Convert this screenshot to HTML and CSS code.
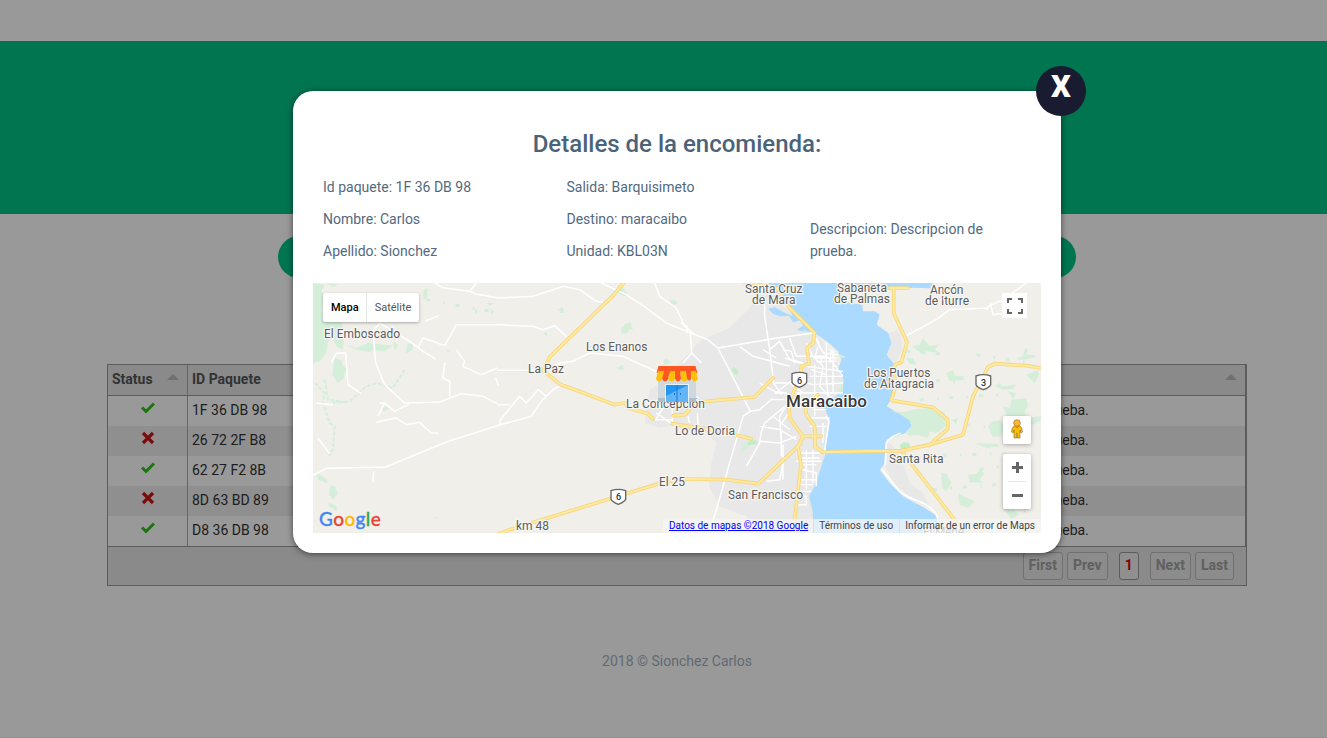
FILE: index.html
```html
<!DOCTYPE html>
<html lang="es">
<head>
<meta charset="utf-8">
<title>Detalles de la encomienda</title>
<link rel="stylesheet" href="styles.css">
</head>
<body>
<div class="page">
  <header class="banner"></header>
  <div class="search"></div>
  <section class="table">
    <div class="thead"><div class="cell status">Status<i class="sort"></i></div><div class="cell">ID Paquete</div><div class="cell last"><i class="sort"></i></div></div>
    <div class="row"><div class="cell status"><svg class="ico" viewBox="0 0 14 14"><path class="ok" d="M1 6.5l4 4 8-8"/></svg></div><div class="cell">1F 36 DB 98</div><div class="cell last">Descripcion de prueba.</div></div>
    <div class="row"><div class="cell status"><svg class="ico" viewBox="0 0 14 14"><path class="no" d="M2 2l10 10M12 2L2 12"/></svg></div><div class="cell">26 72 2F B8</div><div class="cell last">Descripcion de prueba.</div></div>
    <div class="row"><div class="cell status"><svg class="ico" viewBox="0 0 14 14"><path class="ok" d="M1 6.5l4 4 8-8"/></svg></div><div class="cell">62 27 F2 8B</div><div class="cell last">Descripcion de prueba.</div></div>
    <div class="row"><div class="cell status"><svg class="ico" viewBox="0 0 14 14"><path class="no" d="M2 2l10 10M12 2L2 12"/></svg></div><div class="cell">8D 63 BD 89</div><div class="cell last">Descripcion de prueba.</div></div>
    <div class="row"><div class="cell status"><svg class="ico" viewBox="0 0 14 14"><path class="ok" d="M1 6.5l4 4 8-8"/></svg></div><div class="cell">D8 36 DB 98</div><div class="cell last">Descripcion de prueba.</div></div>
    <div class="pager"><span class="pg">First</span><span class="pg">Prev</span><span class="pg current">1</span><span class="pg">Next</span><span class="pg">Last</span></div>
  </section>
  <footer class="copy">2018 © Sionchez Carlos</footer>
</div>
<div class="overlay">
  <div class="modal">
    <button class="close">X</button>
    <h2 class="title">Detalles de la encomienda:</h2>
    <div class="details">
      <div class="col"><p>Id paquete: 1F 36 DB 98</p><p>Nombre: Carlos</p><p>Apellido: Sionchez</p></div>
      <div class="col"><p>Salida: Barquisimeto</p><p>Destino: maracaibo</p><p>Unidad: KBL03N</p></div>
      <div class="col"><p>Descripcion: Descripcion de prueba.</p></div>
    </div>
    <div class="map">
      <svg class="canvas" viewBox="0 0 2184 750">
        <!-- urban areas -->
        <path class="urban" d="M1360 0L1325 50L1310 75L1250 135L1165 170L1100 240L1080 330L1060 400L1100 440L1180 450L1210 480L1195 540L1188 610L1220 670L1300 700L1345 750L1520 750L1520 620L1560 440L1600 280L1510 150L1400 60Z"/>
        <path class="urban" d="M1010 320L1040 300L1150 290L1150 400L1100 425L1040 435L995 420L1000 380Z"/>
        <!-- lake -->
        <path class="water" d="M1365 0L1395 35L1425 75L1440 100L1412 88L1385 72L1366 78L1380 92L1400 100L1428 98L1440 118L1462 112L1470 128L1452 140L1475 148L1505 150L1545 178L1575 205L1585 230L1575 260L1592 290L1588 325L1562 345L1535 375L1550 410L1542 440L1534 480L1538 510L1522 560L1505 610L1488 640L1498 680L1504 750L1889 750L1874 700L1835 675L1770 640L1730 600L1701 562L1715 540L1716 500L1721 470L1776 450L1796 430L1790 412L1760 392L1721 370L1741 340L1741 240L1721 215L1736 180L1726 150L1691 125L1700 95L1685 85L1650 85L1648 65L1600 58L1575 35L1600 22L1740 20L1800 14L1850 16L1860 0Z"/>
        <path class="urban" d="M1726 150L1755 142L1765 165L1768 205L1745 240L1724 215L1736 180ZM1722 475L1716 545L1740 600L1790 640L1850 670L1830 630L1790 600L1770 540L1750 500Z"/>
        <path class="shore" d="M1763 450Q1725 465 1720 480L1717 545M1704 556C1745 600 1745 625 1800 648Q1860 668 1872 700L1884 750M1538 400L1548 415L1538 480L1534 515"/>
        <!-- vegetation -->
        <path class="green" d="M0 0L35 5L25 25L40 40L28 60L25 90L60 75L95 60L105 80L85 120L95 150L90 200L70 190L60 165L45 175L40 210L20 235L0 240ZM65 225L85 232L90 250L100 255L92 285L75 300L58 275ZM40 0L75 5L60 12ZM332 20L345 15L342 45L330 50ZM240 175L255 185L245 205ZM100 185L130 195L165 180L240 188L215 205L180 202L170 208L130 200ZM282 185L300 180L298 200L278 212ZM205 375L222 370L228 378L210 385ZM52 605L65 610L75 630L60 650L48 635ZM10 570L45 590L40 600L15 590ZM482 75L494 85L490 95ZM520 60L545 60L530 68ZM530 78L545 85L535 95ZM400 200L410 203L405 210ZM45 658L70 668L72 685L48 670ZM362 700L376 704L370 708Z"/>
        <path class="greenline" d="M60 360L110 355L160 310L190 300L240 315L275 260M35 290L45 350L100 358M5 300L35 330L30 360L50 420L65 430L60 500L48 520"/>
        <path class="green" d="M905 25L925 8L935 22L950 40L930 38ZM925 135L938 122L952 118L960 140L950 138L940 152L925 150ZM745 70L755 90L740 90ZM690 150L703 148L700 160ZM735 80L750 72L752 88ZM910 255L930 245L932 258L920 262ZM1050 230L1060 225L1075 240L1055 245ZM1070 52L1085 50L1095 60L1080 65ZM1255 265L1262 252L1278 262L1275 280L1258 274ZM1278 520L1290 485L1305 470L1335 478L1310 488L1285 510ZM1576 320L1590 300L1590 325L1580 340ZM1572 210L1600 222L1585 226ZM1466 140L1500 148L1480 152Z"/>
        <path class="green" d="M1732 382L1770 388L1810 378L1860 375L1895 388L1898 430L1870 450L1850 445L1845 465L1815 455L1790 458L1776 450L1796 430L1790 412L1760 392ZM1798 190L1820 185L1830 165L1850 190L1878 185L1865 200L1880 210L1840 205L1830 215L1810 200ZM1780 225L1800 225L1810 245L1790 242ZM1900 270L1920 262L1926 280L1950 278L1955 290L1910 294ZM2070 370L2090 375L2095 350L2140 345L2145 370L2135 385L2140 405L2184 400L2184 412L2160 425L2120 410L2090 420L2080 395ZM2025 430L2040 415L2060 412L2075 430L2065 460L2040 462ZM1965 575L1990 572L2000 562L2015 570L2000 590L2012 600L1970 598ZM1885 570L1900 572L1915 600L1900 626L1888 615ZM1935 630L1950 640L1975 650L1985 655L1965 675L1940 665ZM2070 675L2090 670L2110 665L2105 685L2120 695L2095 708ZM2110 225L2130 220L2136 195L2145 200L2140 215L2165 215L2170 222L2120 232ZM2045 310L2060 300L2065 310L2110 305L2100 318L2070 320ZM2140 275L2175 262L2178 275L2165 300ZM1985 480L2050 482L2060 490L2020 495ZM2120 650L2135 640L2150 655L2135 690ZM1915 410L1935 405L1930 425ZM2085 325L2110 330L2100 350Z"/>
        <path class="park" d="M1762 485L1772 477L1788 480L1792 492L1775 500L1762 496ZM1305 478L1312 470L1335 474L1330 484L1306 486ZM1257 262L1262 253L1276 264L1272 276Z"/>
        <path class="speck" d="M1780 285L1960 300M1990 215L2160 240M1820 350L2060 335M1800 520L2100 510M1860 620L2110 600M1960 425L2120 445M2000 560L2100 545M1780 205L1900 215M1910 725L2100 715M340 50L560 90"/>
        <!-- local roads -->
        <path class="road" d="M365 0L390 14L470 25L492 34L552 44M470 25L490 0M200 120L180 145L188 240L215 305L275 360L380 357L445 332L510 340L552 362M200 120L290 175L330 205L368 228M315 195L330 165L395 188L430 125L552 125M430 200L455 235L450 250L505 275L552 255M335 115L378 98M395 240L390 285L410 295L410 340M70 210H98L105 305L145 332M55 240L70 210M200 360L215 360L245 385L290 362M215 360L195 400M190 418L250 405L280 425L320 418L355 450H375M0 577L40 556L218 552L400 477L552 428M15 465L50 512M8 360L60 366M182 565L180 598M548 285L556 308"/>
        <path class="road" d="M552 45L660 40L752 10L800 20L850 55L880 60M865 0L940 35L1000 75L1060 120L1184 170L1215 195L1394 165L1500 150M1025 0L1040 40L1090 75L1115 130L1140 150M552 125L660 130L690 140L725 128L760 160M552 262H690M552 428L655 400L685 355L720 320L755 300M552 365H590M562 425L562 410L620 340L640 360L675 320L700 340M700 262L740 240L780 235L830 210L930 220L1040 270M1104 120L1122 130V150M1132 150L1136 210L1165 240M1136 210L1110 240"/>
        <path class="road" d="M1215 195L1312 385L1290 400L1190 750M1312 385L1340 380L1380 345M1440 350L1355 420L1344 450L1340 480L1300 550M1355 50V100L1370 200L1382 300L1405 335M1280 190L1320 220L1430 250M1370 200L1400 175L1430 230L1480 245M1430 165L1450 220H1540M1040 370L1050 375L1028 410H1080M1030 390L1080 425M1078 370V425M1360 595L1400 590L1410 540M1470 560L1510 570V610M1450 510H1520M1450 535H1525M1455 590H1510M1455 640H1480V665H1452M1410 485V590M1125 400L1130 420M1153 390L1155 425M1095 280L1050 310M1340 475L1400 480L1450 460"/>
        <path class="road thin" d="M1510 165L1525 200L1560 240L1590 280M1480 180L1500 220L1530 250L1520 310L1560 350M1510 170L1530 210L1575 215M1480 250L1590 265M1490 280H1590M1380 300H1430L1470 330M1400 320L1440 290L1500 305L1590 300M1450 330L1590 330M1370 350L1500 350M1500 380H1540M1495 405H1550M1490 430H1540M1505 245V400M1540 180V300M1560 200V330M1430 350L1400 400L1405 480M1460 260L1440 340M1380 400L1430 440M1340 430L1400 440L1450 470M1500 500V600M1480 500V620M1465 525H1520M1460 545H1510M1530 420V480M1455 605H1500M1458 625H1495M1405 440V520M1415 225L1470 240M1384 330H1420L1430 385L1400 430M1495 260L1540 275L1545 340M1410 200L1435 205L1445 240M1340 300L1385 325L1420 330M1350 200L1390 225M1515 190L1505 225H1570M1510 235H1570M1525 220V240M1555 200L1550 240"/>
        <path class="road" d="M1780 158L1870 110L1910 80L2025 75M2140 0L2070 50L2025 70L2022 80M2032 60L2040 95L2060 92L2085 105"/>
        <!-- highways -->
        <g class="hwy-edge"><use href="#hw"/></g>
        <g class="hwy"><path id="hw" d="M932 0L900 38L710 222L690 262L740 303L905 365L935 360L945 375L1005 392L1020 408M1080 398L1115 395L1150 358L1235 350L1325 342L1380 285M1078 422L1220 445L1315 467M552 755L590 740L1050 598L1124 588L1240 590L1336 602L1460 485L1470 460H1525M1290 -5L1390 15L1430 75L1505 150L1500 180L1482 195L1488 242L1465 250L1462 285Q1440 325 1427 365L1430 405L1455 440L1470 460L1455 490L1464 545L1440 750M1515 335L1478 375L1480 395L1505 430L1506 490L1530 508L1644 505L1765 503L1850 485L1950 455L1980 340L2025 252L2045 242L2140 248L2184 255M1729 15H1785M1742 15V90L1782 178L1765 238L1745 245V320L1735 352L1860 373L1904 410V438L1848 487M1765 503L1955 750"/></g>
        <g class="shield"><path id="sh" d="M894 623Q916 615 938 623V649Q935 657 916 664Q897 657 894 649Z"/><use href="#sh" x="543" y="-351"/><use href="#sh" x="1095" y="-344"/></g>
      </svg>
      <svg class="labels" viewBox="0 0 728 250">
        <g class="lb">
          <text x="11" y="55" textLength="76">El Emboscado</text><text x="273" y="68" textLength="61.5">Los Enanos</text><text x="215" y="90" textLength="36">La Paz</text><text x="313" y="124.500" textLength="79">La Concepción</text><text x="362" y="152" textLength="60">Lo de Doria</text><text x="346" y="203" textLength="26">El 25</text><text x="415" y="216" textLength="75">San Francisco</text><text x="203" y="247" textLength="33">km 48</text>
          <text x="432" y="9.500" textLength="57.500">Santa Cruz</text><text x="439" y="21" textLength="43.500">de Mara</text><text x="524" y="8.500" textLength="50">Sabaneta</text><text x="521" y="20" textLength="56">de Palmas</text><text x="617" y="10.500" textLength="33.500">Ancón</text><text x="612" y="22" textLength="44">de Iturre</text><text x="554" y="93.500" textLength="63.500">Los Puertos</text><text x="551" y="105" textLength="70">de Altagracia</text><text x="576" y="180" textLength="54.500">Santa Rita</text><text x="610" y="253" textLength="41">El Mene</text>
        </g>
        <text class="city" x="473" y="124" textLength="81">Maracaibo</text>
        <g class="num"><text x="305.500" y="217">6</text><text x="486.500" y="100.500">6</text><text x="670.500" y="102.500">3</text></g>
        <!-- shop marker -->
        <g>
          <path fill="#cfd8dc" d="M345 97h38v22h-38z"/><path fill="#b0bec5" d="M345 115h8v4h-8zM376 115h7v4h-7z"/>
          <path fill="#e3f2fd" d="M352 101h24v18h-24z"/><path fill="#64b5f6" d="M353 102h22v17h-22z"/><path fill="#2196f3" d="M353 102h22l-22 11z"/><path fill="#1976d2" d="M363.500 102h1v17h-1z"/><path fill="#1976d2" d="M361 110h1v2h-1zM367 110h1v2h-1z"/>
          <path fill="#ff5722" d="M345.500 83h37l2 7h-41z"/>
          <path fill="#ffc107" d="M345 88h6l-1.500 8q-4 5-6.500 0zM357 88h5v8q-3 5-7 0zM367 88h6l2 8q-4 5-7 0z"/><path fill="#ff5722" d="M351 88h6l-2 8q-3 5-6 0zM362 88h5l1 8q-3 5-6 0zM373 88h5v8q-1 3-4 0z"/><path fill="#ffc107" d="M378 88h5l2 8q-4 5-6 0z"/>
        </g>
      </svg>
      <div class="types"><span class="on">Mapa</span><span>Satélite</span></div>
      <div class="glogo"><span class="b">G</span><span class="r">o</span><span class="y">o</span><span class="b">g</span><span class="g">l</span><span class="r">e</span></div>
      <div class="full"><svg viewBox="0 0 18 18"><path d="M2 6V2H6M12 2h4v4M16 12v4h-4M6 16H2v-4"/></svg></div>
      <div class="peg"><svg viewBox="0 0 14 20"><path fill="#fbbc04" stroke="#9a7b3c" stroke-width=".7" d="M4 7Q2 8 1.500 13L3 14L4 11V19H6.700V14H7.300V19H10V11L11 14L12.500 13Q12 8 10 7Z"/><circle cx="7" cy="4" r="3.300" fill="#fbb829" stroke="#9a7b3c" stroke-width=".7"/><path fill="#e07b22" d="M5 7.300h4L7 9.500z"/></svg></div>
      <div class="zoom"><span class="plus"></span><span class="minus"></span></div>
      <div class="legal"><a href="#">Datos de mapas ©2018 Google</a><span>Términos de uso</span><span>Informar de un error de Maps</span></div>
    </div>
  </div>
</div>
</body>
</html>
```
FILE: styles.css
```css
* { box-sizing: border-box; }
body { margin: 0; font: 14px/22px Roboto, sans-serif; color: #333; background: #fff; overflow: hidden; }
.page { height: 738px; padding-top: 41px; border-bottom: 1px solid #eee; }
.banner { height: 173px; background: #00c386; }
.search { width: 798px; height: 42px; margin: 22px 0 0 278px; border-radius: 21px; background: #00c386; }
.table { width: 1140px; margin: 86px 0 0 107px; border: 1px solid #999; height: 222px; }
.thead, .row { display: grid; grid-template-columns: 80px 758px 1fr; border-right: 1px solid #999; }
.thead { height: 31px; background: #e6e6e6; border-bottom: 1px solid #999; font-weight: 700; color: #555; line-height: 29px; }
.row { height: 30px; line-height: 29px; }
.row:nth-child(odd) { background: #efefef; }
.cell { padding: 0 4px; position: relative; }
.status { border-right: 1px solid #aaa; }
.row .status { display: flex; justify-content: center; padding-top: 5px; }
.row .last { padding-left: 0; }
.sort { position: absolute; right: 8px; top: 9px; border: 6px solid transparent; border-top: 0; border-bottom-color: #bbb; }
.ico { width: 14px; height: 14px; fill: none; }
.ok { stroke: #2dc214; stroke-width: 3; }
.no { stroke: #ce1515; stroke-width: 3.200; }
.pager { height: 39px; background: #e6e6e6; border-top: 1px solid #999; display: flex; justify-content: flex-end; padding: 5px 12px 0 0; font-weight: 700; color: #a0a0a0; line-height: 25px; }
.pg { height: 28px; padding: 0 5px; border: 1px solid #bbb; border-radius: 3px; margin-left: 4px; background: #eaeaea; }
.current { color: #d00; margin: 0 7px 0 11px; border-color: #999; background: #efefef; }
.copy { margin-top: 64px; padding-left: 27px; text-align: center; color: #a5b1c2; }
.overlay { position: absolute; inset: 0; background: rgba(0,0,0,.4); }
.modal { position: relative; width: 768px; height: 462px; margin: 91px 0 0 293px; padding: 36px 20px 20px; background: #fff; border-radius: 20px; box-shadow: 0 1px 6px rgba(0,0,0,.55); color: #526a7f; }
.close { position: absolute; right: -25px; top: -25px; width: 50px; height: 50px; border: 0; border-radius: 50%; background: #191c30; color: #fff; font: 900 31px/42px Roboto, sans-serif; padding: 0 0 8px; }
.title { margin: 0; font-size: 24px; line-height: 34px; font-weight: 500; text-align: center; color: #4b6378; }
.details { display: grid; grid-template-columns: 243.500px 243.500px 203px; padding-left: 10px; height: 122px; padding-top: 15px; align-items: end; padding-bottom: 21px; }
.col p { margin: 0 0 10px; }
.col p:last-child { margin-bottom: 0; }
.map { position: relative; width: 728px; height: 250px; background: #f0efea; overflow: hidden; }
.canvas, .labels { position: absolute; width: 728px; height: 250px; fill: none; }
.urban { fill: #e8e8e8; }
.water { fill: #aadaff; }
.shore { stroke: #fff; stroke-width: 5; }
.green { fill: #d5eeda; }
.park { fill: #c4edc6; }
.greenline { stroke: #d5eeda; stroke-width: 6; stroke-dasharray: 12 5; }
.speck { stroke: #d5eeda; stroke-width: 9; stroke-dasharray: 12 40 5 32; }
.road { stroke: #fff; stroke-width: 4.500; stroke-linejoin: round; }
.thin { stroke-width: 4; }
.hwy-edge { stroke: #f5d77b; stroke-width: 11; stroke-linejoin: round; stroke-linecap: round; }
.hwy { stroke: #ffe99f; stroke-width: 6; stroke-linejoin: round; stroke-linecap: round; }
.shield { fill: #fff; stroke: #666; stroke-width: 4; }
.lb { fill: #5c5c5c; font-size: 12px; stroke: #f5f5f3; stroke-width: 2.500px; paint-order: stroke; }
.city { fill: #383838; font-size: 17px; font-weight: 500; stroke: #fff; stroke-width: 2px; paint-order: stroke; }
.num { fill: #333; font-size: 9px; font-weight: 500; text-anchor: middle; }
.types { position: absolute; left: 10px; top: 10px; width: 96px; height: 29px; display: flex; background: #fff; border-radius: 2px; box-shadow: 0 1px 3px rgba(0,0,0,.3); font-size: 11px; line-height: 29px; color: #565656; }
.types span { padding: 0 8px; }
.types .on { padding-right: 7px; color: #000; font-weight: 500; border-right: 1px solid #e6e6e6; }
.glogo { position: absolute; left: 6px; top: 225px; font: 500 19px/22px Lato, sans-serif; letter-spacing: .4px; -webkit-text-stroke: .3px; }
.b { color: #4285f4; } .r { color: #ea4335; } .y { color: #fbbc05; } .g { color: #34a853; }
.full { position: absolute; left: 689px; top: 10px; width: 25px; height: 25px; background: #fff; padding: 3.500px; }
.full svg { display: block; width: 18px; height: 18px; fill: none; stroke: #666; stroke-width: 2; }
.peg, .zoom { position: absolute; left: 690px; width: 28px; background: #fff; border-radius: 2px; box-shadow: 0 1px 4px rgba(0,0,0,.3); }
.peg { top: 133px; height: 28px; }
.peg svg { display: block; width: 14px; height: 20px; margin: 3px 7px; }
.zoom { top: 171px; height: 55px; }
.zoom span { display: block; height: 27px; margin: 0 5px; background: linear-gradient(#666,#666) center/11px 3px no-repeat; }
.zoom .plus { height: 28px; border-bottom: 1px solid #e6e6e6; background: linear-gradient(#666,#666) center/11px 3px no-repeat, linear-gradient(#666,#666) center/3px 11px no-repeat; }
.legal { position: absolute; right: 0; bottom: 0; height: 14px; display: flex; background: rgba(245,245,245,.75); font-size: 10px; line-height: 14px; color: #444; white-space: nowrap; }
.legal a { color: #00f; text-decoration: underline; padding: 0 5px 0 6px; }
.legal span { padding: 0 6px 0 5px; border-left: 1px solid #ddd; }
```
